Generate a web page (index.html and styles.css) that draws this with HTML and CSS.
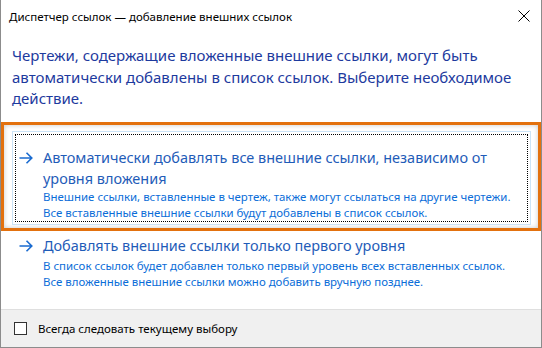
FILE: index.html
```html
<!DOCTYPE html>
<html lang="ru">
<head>
  <meta charset="UTF-8">
  <title>Диспетчер ссылок</title>
  <link rel="stylesheet" href="styles.css">
</head>
<body>

<div class="dialog">
  <div class="titlebar">
    <span class="caption">Диспетчер ссылок — добавление внешних ссылок</span>
    <span class="close">
      <svg width="12" height="12" viewBox="0 0 12 12">
        <path d="M0.5 0.5 L11.5 11.5 M11.5 0.5 L0.5 11.5" stroke="#000" stroke-width="1" fill="none"/>
      </svg>
    </span>
  </div>

  <div class="content">
    <p class="instruction">Чертежи, содержащие вложенные внешние ссылки, могут быть автоматически добавлены в список ссылок. Выберите необходимое действие.</p>

    <!-- marked option (orange frame) -->
    <div class="marker">
      <div class="cmd-link focused">
        <svg class="arrow" width="14" height="12" viewBox="0 0 14 12">
          <path d="M0.5 6 H13 M7.5 0.7 L12.8 6 L7.5 11.3" stroke="#1a6bd0" stroke-width="1.6" fill="none"/>
        </svg>
        <div class="cmd-text">
          <div class="cmd-title">Автоматически добавлять все внешние ссылки, независимо от уровня вложения</div>
          <div class="cmd-note">Внешние ссылки, вставленные в чертеж, также могут ссылаться на другие чертежи.<br>Все вставленные внешние ссылки будут добавлены в список ссылок.</div>
        </div>
      </div>
    </div>

    <div class="cmd-link second">
      <svg class="arrow" width="14" height="12" viewBox="0 0 14 12">
        <path d="M0.5 6 H13 M7.5 0.7 L12.8 6 L7.5 11.3" stroke="#1a6bd0" stroke-width="1.6" fill="none"/>
      </svg>
      <div class="cmd-text">
        <div class="cmd-title">Добавлять внешние ссылки только первого уровня</div>
        <div class="cmd-note">В список ссылок будет добавлен только первый уровень всех вставленных ссылок.<br>Все вложенные внешние ссылки можно добавить вручную позднее.</div>
      </div>
    </div>
  </div>

  <div class="footer">
    <span class="checkbox"></span>
    <span class="footer-label">Всегда следовать текущему выбору</span>
  </div>
</div>

</body>
</html>
```

FILE: styles.css
```css
body {
  margin: 0;
  padding: 0;
  background: #ffffff;
  font-family: "Noto Sans", "Open Sans", sans-serif;
}

.dialog {
  width: 540px;
  height: 347px;
  border: 1px solid #8c8c8c;
  border-top: none;
  background: #ffffff;
  display: flex;
  flex-direction: column;
}

/* Title bar */
.titlebar {
  height: 31px;
  display: flex;
  justify-content: space-between;
  align-items: flex-start;
  padding: 9px 0 0 8px;
  box-sizing: border-box;
}

.caption {
  font-size: 11.5px;
  line-height: 16px;
  color: #000000;
}

.close {
  margin: 1px 11px 0 0;
  line-height: 0;
}

/* Content */
.content {
  flex: 1;
  padding-top: 14px;
}

.instruction {
  margin: 0 0 12px 11px;
  width: 500px;
  font-size: 15px;
  line-height: 21.5px;
  color: #1d3a9e;
}

.marker {
  border: 3px solid #e3710e;
  padding: 6px 7px 3px 8px;
  box-shadow: inset 0 0 5px rgba(0, 0, 0, 0.22);
}

.cmd-link {
  display: flex;
  align-items: flex-start;
}

.cmd-link.focused {
  border: 1px solid #cce4f7;
  outline: 1px dotted #000000;
  outline-offset: -4px;
  padding: 15px 0 3px 6px;
  background: #ffffff;
}

.cmd-link.second {
  padding: 4px 0 0 18px;
}

.arrow {
  margin: 5px 10px 0 0;
  flex: none;
}

.cmd-title {
  width: 470px;
  font-size: 14.45px;
  line-height: 21px;
  color: #1f5cb8;
}

.cmd-note {
  font-size: 11.45px;
  line-height: 16px;
  color: #0b6dd8;
}

.second .cmd-note {
  margin-top: 2px;
}

/* Footer */
.footer {
  height: 37px;
  background: #f0f0f0;
  border-top: 1px solid #dfdfdf;
  display: flex;
  align-items: center;
  padding-left: 13px;
}

.checkbox {
  width: 11px;
  height: 11px;
  border: 1px solid #333333;
  background: #ffffff;
  margin-right: 11px;
}

.footer-label {
  font-size: 11.5px;
  color: #000000;
}
```
